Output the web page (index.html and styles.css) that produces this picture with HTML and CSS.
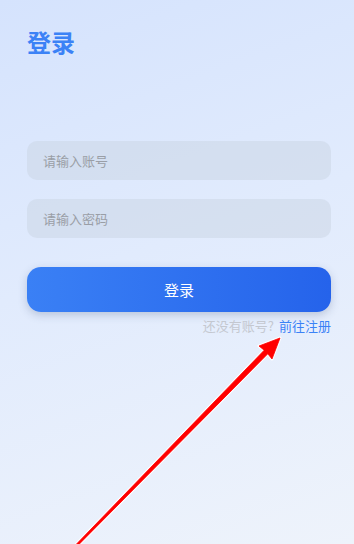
FILE: index.html
```html
<!DOCTYPE html>
<html lang="zh-CN">
<head>
    <meta charset="UTF-8">
    <meta name="viewport" content="width=device-width, initial-scale=1.0">
    <title>登录</title>
    <link rel="stylesheet" href="styles.css">
</head>
<body>
    <div class="page">
        <h1 class="title">登录</h1>
        <div class="form">
            <input class="field" type="text" placeholder="请输入账号">
            <input class="field" type="password" placeholder="请输入密码">
            <button class="login-btn">登录</button>
            <div class="register">
                <span class="register-hint">还没有账号?</span>
                <a class="register-link" href="#">前往注册</a>
            </div>
        </div>
    </div>
    <svg class="arrow" width="354" height="544" viewBox="0 0 354 544">
        <path class="arrow-outline" d="M74.8 545.8 L264.2 350.2 L259 346 L280 338 L272 359 L267.8 353.8 L77.2 546.2 Z"/>
        <path class="arrow-body" d="M74.8 545.8 L264.2 350.2 L259 346 L280 338 L272 359 L267.8 353.8 L77.2 546.2 Z"/>
    </svg>
</body>
</html>
```

FILE: styles.css
```css
html,body{
    margin:0;
    height:100%;
    width:100%;
    font-family: "Noto Sans CJK SC", "Noto Sans", sans-serif;
}
body{
    background: linear-gradient(160deg, #d5e3fd 0%, #e1ebfd 45%, #eef3fb 100%);
    position: relative;
    overflow: hidden;
}
.page{
    padding: 0 23px 0 27px;
}
.title{
    margin:0;
    padding-top:26px;
    font-size:24px;
    line-height:32px;
    font-weight:700;
    color:#3b82f6;
}
.form{
    margin-top:83px;
    display:flex;
    flex-direction:column;
}
.field{
    height:39px;
    border:none;
    outline:none;
    border-radius:10px;
    background-color:rgba(200, 210, 225, 0.45);
    padding:0 16px;
    font-family:inherit;
    font-size:13px;
    color:#333;
    margin-bottom:19px;
}
.field::placeholder{
    color:#9a9ea6;
}
.login-btn{
    margin-top:10px;
    height:45px;
    border:none;
    border-radius:14px;
    background:linear-gradient(90deg, #3a80f5 0%, #2563eb 100%);
    box-shadow: rgba(60, 80, 120, 0.25) 0px 3px 8px;
    color:#fff;
    font-family:inherit;
    font-size:15px;
}
.register{
    margin-top:5px;
    display:flex;
    justify-content:flex-end;
    gap:5px;
    font-size:13px;
    line-height:18px;
}
.register-hint{
    color:#c4c8d0;
}
.register-link{
    color:#3b82f6;
    text-decoration:none;
}
.arrow{
    position:absolute;
    left:0;
    top:0;
    pointer-events:none;
}
.arrow-outline{
    fill:none;
    stroke:rgba(255,255,255,0.9);
    stroke-width:3;
    stroke-linejoin:round;
}
.arrow-body{
    fill:#f00;
    stroke:#f00;
    stroke-width:0.8;
    stroke-linejoin:round;
}
```
